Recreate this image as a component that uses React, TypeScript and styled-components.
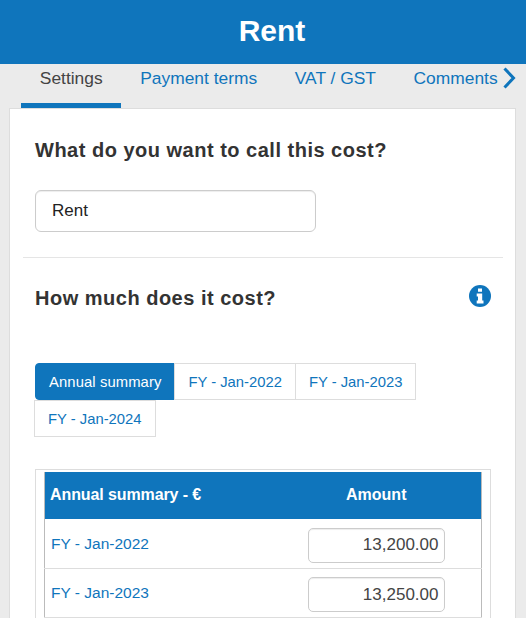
import styled, { createGlobalStyle } from 'styled-components';

const blue = '#0f75bc';

const Global = createGlobalStyle`
  html, body {
    margin: 0;
    height: 100%;
    overflow: hidden;
    background: #ebebeb;
    font-family: "Liberation Sans", Arial, sans-serif;
  }
  * {
    box-sizing: border-box;
  }
`;

const Header = styled.header`
  height: 64px;
  padding-left: 18px;
  background: ${blue};
  color: #fff;
  font-size: 30px;
  font-weight: 700;
  line-height: 62px;
  text-align: center;
`;

const TabBar = styled.nav`
  height: 44px;
  padding-left: 21px;
  display: flex;
  align-items: stretch;
`;

const Tab = styled.a<{ $active?: boolean }>`
  padding: 4px 18.8px 0;
  font-size: 17.4px;
  line-height: 20px;
  white-space: nowrap;
  color: ${(props) => (props.$active ? '#444' : blue)};
  border-bottom: 5px solid ${(props) => (props.$active ? blue : 'transparent')};
`;

const More = styled.svg`
  flex: 0 0 14px;
  width: 14px;
  height: 22px;
  margin: 3px 0 0 -14px;
`;

const Panel = styled.main`
  margin: 0 10px 0 9px;
  padding: 0 12px 0 13px;
  height: 510px;
  overflow: hidden;
  background: #fff;
  border: 1px solid #ddd;
  border-bottom: 0;
`;

const Section = styled.section`
  padding: 0 12px;
`;

const Heading = styled.h2`
  margin: 0;
  font-size: 20px;
  line-height: 24px;
  font-weight: 700;
  color: #333;
  letter-spacing: 0.5px;
`;

const NameInput = styled.input`
  display: block;
  width: 281px;
  height: 42px;
  margin-top: 28px;
  padding: 0 16px;
  border: 1px solid #ccc;
  border-radius: 6px;
  font: 17px "Liberation Sans", Arial, sans-serif;
  color: #222;
  box-shadow: inset 0 1px 1px rgba(0, 0, 0, 0.075);
`;

const NameSection = styled(Section)`
  padding-top: 29px;
  padding-bottom: 25px;
  border-bottom: 1px solid #e5e5e5;
`;

const CostSection = styled(Section)`
  padding-top: 28px;
`;

const CostHead = styled.div`
  display: flex;
  justify-content: space-between;
  align-items: flex-start;
  height: 77px;
`;

const InfoIcon = styled.svg`
  flex: 0 0 22px;
  width: 22px;
  height: 22px;
  margin-top: -1px;
`;

const Periods = styled.div`
  display: flex;
  flex-wrap: wrap;
  width: 456px;
`;

const Period = styled.a<{ $active?: boolean }>`
  height: 37px;
  padding: 0 13px;
  margin-left: -1px;
  font-size: 14.8px;
  line-height: 36px;
  white-space: nowrap;
  border: 1px solid #ddd;
  color: ${blue};

  &:first-child {
    margin-left: 0;
  }

  ${(props) =>
    props.$active &&
    `
      background: ${blue};
      border-color: ${blue};
      border-radius: 4px 0 0 4px;
      color: #fff;
      letter-spacing: 0.1px;
    `}
`;

const TableFrame = styled.div`
  width: 456px;
  margin-top: 32px;
  padding: 2px 8px 0;
  border: 1px solid #ddd;
  border-bottom: 0;
`;

const Table = styled.table`
  width: 100%;
  border-collapse: collapse;
  border-left: 1px solid #bbb;
  border-right: 1px solid #bbb;
  table-layout: fixed;
`;

const HeadCell = styled.th<{ $amount?: boolean }>`
  height: 47px;
  width: ${(props) => (props.$amount ? 'auto' : '263px')};
  padding: 0 ${(props) => (props.$amount ? '36px' : '5px')} 2px ${(props) => (props.$amount ? '0' : '5px')};
  background: ${blue};
  color: #fff;
  font-size: 16px;
  font-weight: 700;
  letter-spacing: ${(props) => (props.$amount ? '0' : '-0.1px')};
  text-align: ${(props) => (props.$amount ? 'center' : 'left')};
`;

const LabelCell = styled.td`
  height: 49px;
  padding: 1px 6px 0;
  font-size: 15.5px;
  color: ${blue};
  border-bottom: 1px solid #ddd;
`;

const AmountCell = styled.td`
  height: 49px;
  padding: 4px 0 0;
  border-bottom: 1px solid #ddd;
`;

const AmountInput = styled.input`
  display: block;
  width: 137px;
  height: 35px;
  padding: 0 5px;
  border: 1px solid #ccc;
  border-radius: 5px;
  font: 17px "Liberation Sans", Arial, sans-serif;
  color: #444;
  text-align: right;
  box-shadow: inset 0 1px 1px rgba(0, 0, 0, 0.075);
`;

const tabs = ['Payment terms', 'VAT / GST', 'Comments'];
const periods = ['FY - Jan-2022', 'FY - Jan-2023', 'FY - Jan-2024'];
const rows = [
  { label: 'FY - Jan-2022', amount: '13,200.00' },
  { label: 'FY - Jan-2023', amount: '13,250.00' },
];

export default function App() {
  return (
    <>
      <Global />
      <Header>Rent</Header>
      <TabBar>
        <Tab $active>Settings</Tab>
        {tabs.map((tab) => (
          <Tab key={tab}>{tab}</Tab>
        ))}
        <More viewBox="0 0 14 22" fill="none">
          <path d="M2.5 1.5 L11.5 11 L2.5 20.5" stroke={blue} strokeWidth="3" />
        </More>
      </TabBar>
      <Panel>
        <NameSection>
          <Heading>What do you want to call this cost?</Heading>
          <NameInput defaultValue="Rent" />
        </NameSection>
        <CostSection>
          <CostHead>
            <Heading>How much does it cost?</Heading>
            <InfoIcon viewBox="0 0 22 22">
              <circle cx="11" cy="11" r="11" fill={blue} />
              <path
                d="M9 3.5h4v3.2H9z M7.7 8.6h5.5v6.9h1.3v3H7.7v-3H9v-3.9H7.7z"
                fill="#fff"
              />
            </InfoIcon>
          </CostHead>
          <Periods>
            <Period $active>Annual summary</Period>
            {periods.map((period) => (
              <Period key={period}>{period}</Period>
            ))}
          </Periods>
          <TableFrame>
            <Table>
              <thead>
                <tr>
                  <HeadCell>Annual summary - €</HeadCell>
                  <HeadCell $amount>Amount</HeadCell>
                </tr>
              </thead>
              <tbody>
                {rows.map((row) => (
                  <tr key={row.label}>
                    <LabelCell>{row.label}</LabelCell>
                    <AmountCell>
                      <AmountInput defaultValue={row.amount} />
                    </AmountCell>
                  </tr>
                ))}
              </tbody>
            </Table>
          </TableFrame>
        </CostSection>
      </Panel>
    </>
  );
}
